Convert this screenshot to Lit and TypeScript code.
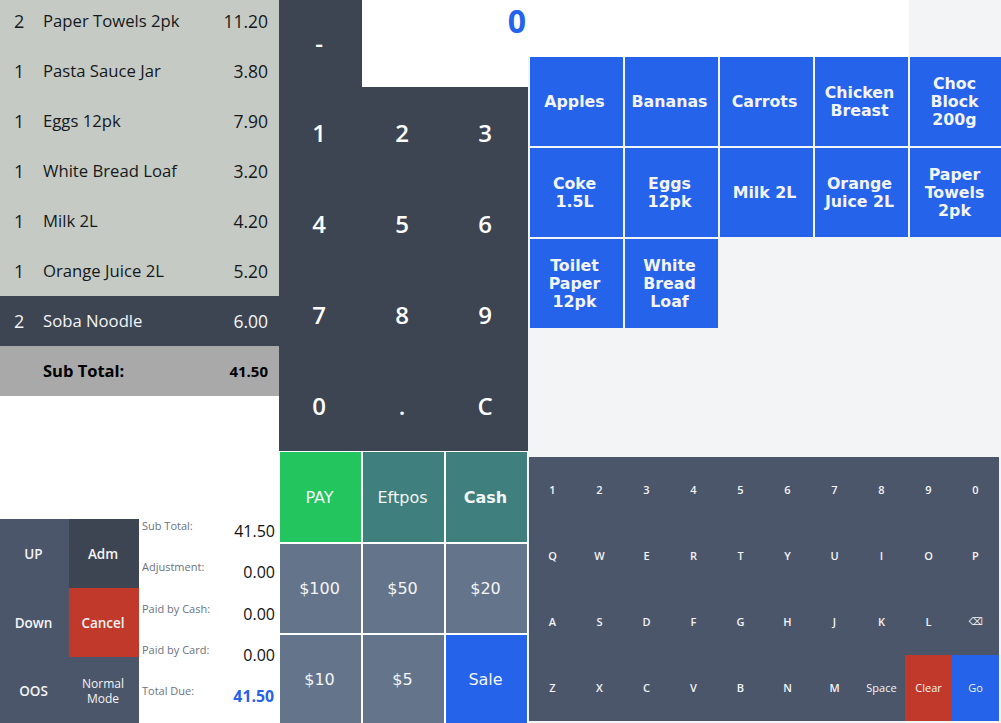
import { LitElement, html, css } from "lit";
import { customElement } from "lit/decorators.js";

const items = [
  ["2", "Paper Towels 2pk", "11.20"],
  ["1", "Pasta Sauce Jar", "3.80"],
  ["1", "Eggs 12pk", "7.90"],
  ["1", "White Bread Loaf", "3.20"],
  ["1", "Milk 2L", "4.20"],
  ["1", "Orange Juice 2L", "5.20"],
];
const products = ["Apples", "Bananas", "Carrots", "Chicken Breast", "Choc Block 200g", "Coke 1.5L", "Eggs 12pk", "Milk 2L", "Orange Juice 2L", "Paper Towels 2pk", "Toilet Paper 12pk", "White Bread Loaf"];
const keys = [..."1234567890QWERTYUIOPASDFGHJKL", "⌫", ..."ZXCVBNM", "Space", "Clear", "Go"];
const summary = [["Sub Total:", "41.50"], ["Adjustment:", "0.00"], ["Paid by Cash:", "0.00"], ["Paid by Card:", "0.00"]];

@customElement("app-root")
export class AppRoot extends LitElement {
  static styles = css`
    :host { display: grid; grid-template-columns: 279px 249px 473px; grid-template-rows: 723px; width: 1001px; height: 723px; overflow: hidden; background: #fff; font-family: "Open Sans", sans-serif; }
    .left { display: flex; flex-direction: column; overflow: hidden; }
    .list { margin-top: -4px; }
    .row { display: grid; grid-template-columns: 43px 1fr auto; align-items: center; height: 50px; box-sizing: border-box; padding: 0 11px 1px 0; background: #c5cbc4; color: #15181c; font-size: 16.7px; }
    .row > :first-child { padding-left: 14px; font-size: 18px; }
    .row > :last-child { font-size: 17.5px; }
    .row.sel { background: #3d4452; color: #f3f4f6; font-weight: 500; }
    .row.sub { background: #a9a9a9; color: #000; font-weight: 700; font-size: 16.5px; }
    .row.sub > :last-child { font-size: 15px; }
    .bottom { margin-top: auto; display: grid; grid-template-columns: 139px 140px; height: 204px; }
    .ctl { display: grid; grid-template-columns: 69px 70px; grid-template-rows: 69px 69px 66px; background: #4c566a; color: #f3f4f6; font-size: 13.5px; font-weight: 600; text-align: center; line-height: 15px; }
    .ctl div { display: flex; align-items: center; justify-content: center; padding: 2px 2px 0 0; }
    .ctl .adm { background: #3d4452; }
    .ctl .cancel { background: #c0392b; }
    .ctl .mode { font-size: 12px; font-weight: 500; }
    .sum { padding: 0 4px 0 3px; overflow: hidden; }
    .sumrow { display: flex; justify-content: space-between; align-items: flex-start; height: 41.25px; }
    .sumrow .l { font-size: 11px; line-height: 13px; color: #6b7280; }
    .sumrow .v { font-size: 16px; line-height: 24px; color: #111; }
    .sumrow.due .v { color: #2563eb; font-weight: 700; font-size: 15.8px; line-height: 24px; margin-right: 1px; }
    .mid { display: flex; flex-direction: column; }
    .pad { display: grid; grid-template-columns: repeat(3, 83px); grid-template-rows: 87px repeat(4, 91px); background: #3d4452; color: #fff; font-size: 24px; font-weight: 600; height: 451px; }
    .pad div { display: flex; align-items: center; justify-content: center; padding-right: 3px; }
    .pad .dash { padding-bottom: 2px; }
    .pad .display { grid-column: 2 / 4; background: #fff; color: #2563eb; font-size: 32px; font-weight: 700; align-items: flex-start; justify-content: flex-end; line-height: 42px; padding-right: 2px; }
    .pay { display: grid; grid-template-columns: repeat(3, 81px); grid-template-rows: 90px 89px 88px; gap: 2px; padding: 1px 1px 0; background: #fff; color: #f3f4f6; font-family: "DejaVu Sans", sans-serif; font-size: 16px; }
    .pay div { display: flex; align-items: center; justify-content: center; background: #64748b; padding-right: 2px; }
    .pay .green { background: #22c55e; }
    .pay .teal { background: #3f7f7d; }
    .pay .blue { background: #2563eb; }
    .pay .bold { font-weight: 700; }
    .right { display: flex; flex-direction: column; background: #f3f4f6; }
    .top { width: 381px; height: 57px; background: #fff; flex: none; }
    .prods { flex: none; height: 400px; display: grid; grid-template-columns: repeat(5, 93px); grid-auto-rows: 89px; gap: 2px; padding-left: 2px; align-content: start; font-family: "DejaVu Sans", sans-serif; }
    .prods div { display: flex; align-items: center; justify-content: center; text-align: center; background: #2563eb; color: #f3f4f6; font-size: 15.8px; font-weight: 700; line-height: 18px; padding: 0 7px 0 3px; }
    .kb { flex: none; margin-left: 1px; width: 470px; height: 264px; display: grid; grid-template-columns: repeat(10, 47px); grid-auto-rows: 66px; background: #4c566a; color: #f3f4f6; font-size: 11px; font-weight: 600; }
    .kb div { display: flex; align-items: center; justify-content: center; padding-bottom: 2px; }
    .kb .clear { background: #c0392b; font-weight: 500; }
    .kb .go { background: #2563eb; font-weight: 500; }
    .kb .space { font-weight: 500; }
    .kb .bs { font-family: "DejaVu Sans", sans-serif; font-size: 10px; font-weight: 400; }
  `;

  private keyClass(k: string) {
    if (k === "Clear") return "clear";
    if (k === "Go") return "go";
    if (k === "Space") return "space";
    if (k === "⌫") return "bs";
    return "";
  }

  render() {
    return html`
      <section class="left">
        <div class="list">
          ${items.map((i) => html`<div class="row"><span>${i[0]}</span><span>${i[1]}</span><span>${i[2]}</span></div>`)}
          <div class="row sel"><span>2</span><span>Soba Noodle</span><span>6.00</span></div>
          <div class="row sub"><span></span><span>Sub Total:</span><span>41.50</span></div>
        </div>
        <div class="bottom">
          <div class="ctl">
            <div>UP</div><div class="adm">Adm</div>
            <div>Down</div><div class="cancel">Cancel</div>
            <div>OOS</div><div class="mode">Normal<br />Mode</div>
          </div>
          <div class="sum">
            ${summary.map((s) => html`<div class="sumrow"><span class="l">${s[0]}</span><span class="v">${s[1]}</span></div>`)}
            <div class="sumrow due"><span class="l">Total Due:</span><span class="v">41.50</span></div>
          </div>
        </div>
      </section>
      <section class="mid">
        <div class="pad">
          <div class="dash">-</div><div class="display">0</div>
          ${[..."123456789"].map((k) => html`<div>${k}</div>`)}
          <div>0</div><div>.</div><div>C</div>
        </div>
        <div class="pay">
          <div class="green">PAY</div><div class="teal">Eftpos</div><div class="teal bold">Cash</div>
          <div>$100</div><div>$50</div><div>$20</div>
          <div>$10</div><div>$5</div><div class="blue">Sale</div>
        </div>
      </section>
      <section class="right">
        <div class="top"></div>
        <div class="prods">${products.map((p) => html`<div>${p}</div>`)}</div>
        <div class="kb">
          ${keys.map((k) => html`<div class=${this.keyClass(k)}>${k}</div>`)}
        </div>
      </section>
    `;
  }
}
